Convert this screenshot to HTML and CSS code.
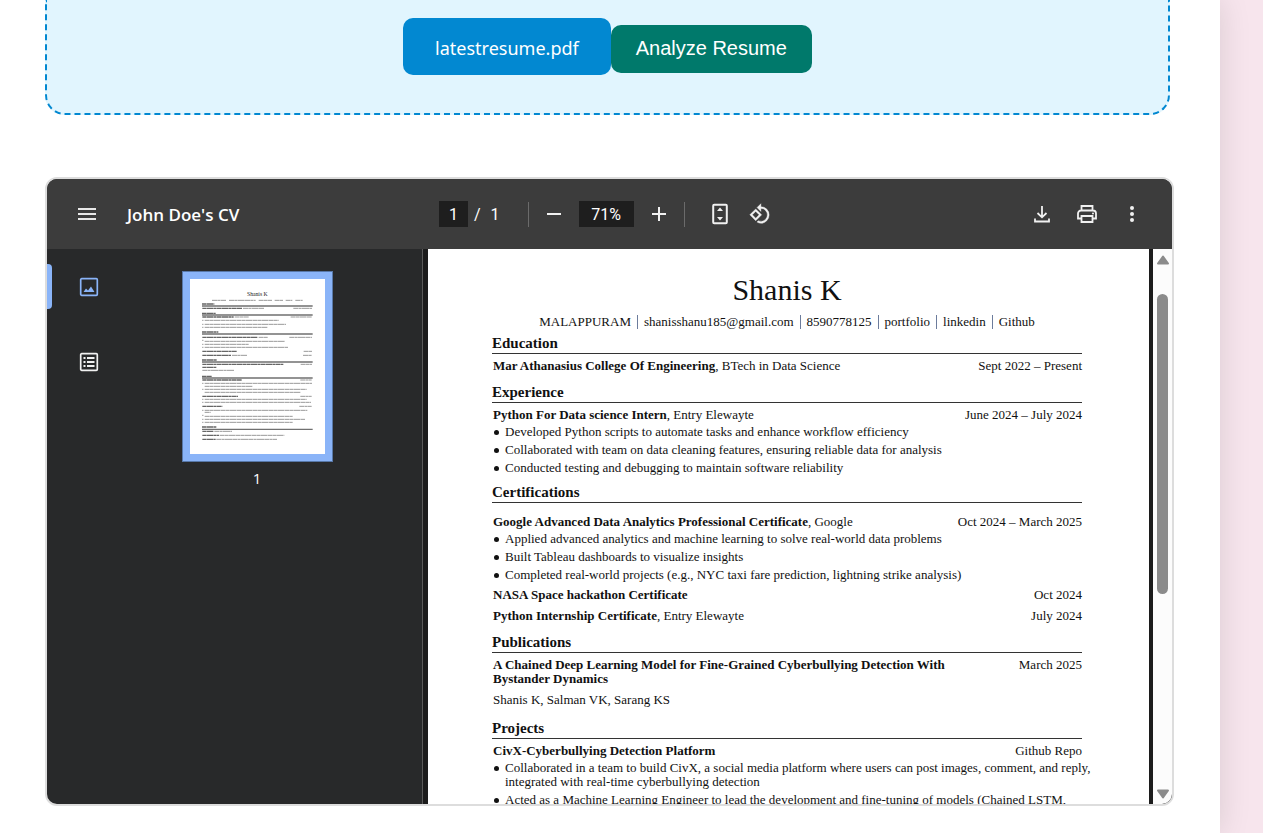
FILE: index.html
```html
<!DOCTYPE html>
<html lang="en">
<head>
<meta charset="utf-8">
<title>Resume Analyzer</title>
<link rel="stylesheet" href="styles.css">
</head>
<body>
<main class="container">
  <section class="upload">
    <button class="file-btn" type="button">latestresume.pdf</button>
    <button class="analyze-btn" type="button">Analyze Resume</button>
  </section>

  <section class="viewer">
    <header class="toolbar">
      <div class="bar-left">
        <button class="icon-btn" type="button" aria-label="Menu"><svg width="20" height="14" viewBox="0 0 20 14"><path d="M1 2h18M1 7h18M1 12h18" stroke="#e8e8e8" stroke-width="2"/></svg></button>
        <span class="doc-title">John Doe's CV</span>
      </div>
      <div class="bar-mid">
        <input class="field page-field" aria-label="Page number" value="1">
        <span class="slash">/</span><span class="total">1</span>
        <span class="divider first"></span>
        <button class="icon-btn" type="button" aria-label="Zoom out"><svg width="14" height="14" viewBox="0 0 14 14"><path d="M0 7h14" stroke="#f1f1f1" stroke-width="2"/></svg></button>
        <input class="field zoom-field" aria-label="Zoom level" value="71%">
        <button class="icon-btn" type="button" aria-label="Zoom in"><svg width="14" height="14" viewBox="0 0 14 14"><path d="M0 7h14M7 0v14" stroke="#f1f1f1" stroke-width="2"/></svg></button>
        <span class="divider"></span>
        <button class="icon-btn fit" type="button" aria-label="Fit to page"><svg width="16" height="22" viewBox="0 0 16 22"><rect x="1.2" y="1.7" width="13.6" height="18.6" rx="1" fill="none" stroke="#f1f1f1" stroke-width="2"/><path d="M8 4.5 11 8H5zM8 17.500 11 14H5z" fill="#f1f1f1"/></svg></button>
        <button class="icon-btn" type="button" aria-label="Rotate"><svg width="22" height="22" viewBox="0 0 24 24"><path fill="#f1f1f1" stroke="#f1f1f1" stroke-width=".4" d="M7.340 6.410.860 12.900l6.490 6.480 6.490-6.480zM3.690 12.900l3.660-3.660L11 12.900l-3.660 3.660zM19.360 6.640A8.950 8.950 0 0 0 13 4V.760L8.760 5 13 9.240V6c1.790 0 3.580.680 4.950 2.050a7.007 7.007 0 0 1 0 9.900 6.973 6.973 0 0 1-7.840 1.390l-1.490 1.490A8.983 8.983 0 0 0 19.360 19.360a8.994 8.994 0 0 0 0-12.720z"/></svg></button>
      </div>
      <div class="bar-right">
        <button class="icon-btn" type="button" aria-label="Download"><svg width="16" height="18" viewBox="0 0 16 18"><path d="M8 1v11M3.500 8 8 12.300 12.500 8M1 13.500V16.500h14v-3" fill="none" stroke="#f1f1f1" stroke-width="1.800"/></svg></button>
        <button class="icon-btn" type="button" aria-label="Print"><svg width="22" height="20" viewBox="0 0 22 20"><g fill="none" stroke="#f1f1f1" stroke-width="1.800"><path d="M5.500 6.500V2h11v4.500M5.500 14.500H2V9.500a3 3 0 0 1 3-3h12a3 3 0 0 1 3 3v5h-3.500"/><path d="M5.500 12h11v6h-11z"/></g><circle cx="17" cy="9.500" r="1" fill="#f1f1f1"/></svg></button>
        <button class="icon-btn" type="button" aria-label="More"><svg width="6" height="18" viewBox="0 0 6 18"><g fill="#f1f1f1"><circle cx="3" cy="3" r="2"/><circle cx="3" cy="9" r="2"/><circle cx="3" cy="15" r="2"/></g></svg></button>
      </div>
    </header>

    <div class="stage">
      <aside class="sidebar">
        <nav class="tabs">
          <button class="tab active" type="button" aria-label="Thumbnails"><svg width="20" height="20" viewBox="0 0 20 20"><rect x="1.700" y="1.700" width="16.600" height="16.600" rx="1" fill="none" stroke="#8ab4f8" stroke-width="1.700"/><path d="M4.500 15 7 11.500l2 2 3-4 3.500 5.500z" fill="#8ab4f8"/></svg></button>
          <button class="tab" type="button" aria-label="Document outline"><svg width="20" height="20" viewBox="0 0 20 20"><rect x="1.700" y="1.700" width="16.600" height="16.600" rx="1" fill="none" stroke="#f1f1f1" stroke-width="1.700"/><path d="M4.500 6h2M4.500 10h2M4.500 14h2M8 6h7.500M8 10h7.500M8 14h7.500" stroke="#f1f1f1" stroke-width="1.800"/></svg></button>
        </nav>
        <div class="thumbs">
          <button class="thumb" type="button" aria-label="Page 1">
            <svg class="mini" viewBox="60 57 405 525">
              <text x="262" y="108" text-anchor="middle" font-size="17" fill="#222">Shanis K</text>
              <path class="m-rule" d="M96 138h332M96 165h332M96 222h332M96 306h332M96 354h332M96 508h332"/>
              <path class="m-bold" d="M96 132h37M96 160h41M96 216h49M96 300h45M96 349h29M96 501h43M97 145h119M97 171h94M97 232h166M97 274h104M97 286h86M97 313h243M97 322h42M97 360h118M97 409h107M97 439h60M97 514h34M97 526h50M97 538h40"/>
              <path class="m-text" d="M126 121h42M177 121h80M266 121h40M314 121h25M347 121h20M376 121h22M219 145h64M370 145h56M194 171h42M362 171h64M104 181h222M104 193h244M104 202h188M266 232h28M358 232h68M104 244h241M104 253h132M104 262h250M401 274h25M186 286h45M399 286h27M392 313h34M97 331h95M391 360h34M104 370h322M104 379h144M104 388h306M104 397h287M391 409h34M104 418h306M104 427h319M388 439h37M104 451h308M104 457h18M104 469h264M104 478h301M104 487h264M133 514h53M149 526h194M139 538h182"/>
              <path class="m-dot" d="M97 181h3M97 193h3M97 202h3M97 241h3M97 253h3M97 262h3M97 370h3M97 388h3M97 418h3M97 427h3M97 451h3M97 466h3M97 478h3M97 487h3"/>
            </svg>
          </button>
          <span class="thumb-no">1</span>
        </div>
      </aside>

      <div class="doc">
        <article class="page">
          <h1>Shanis K</h1>
          <p class="contact"><span>MALAPPURAM</span><span>shanisshanu185@gmail.com</span><span>8590778125</span><span>portfolio</span><span>linkedin</span><span>Github</span></p>

          <h2>Education</h2>
          <div class="entry"><p><b>Mar Athanasius College Of Engineering</b>, BTech in Data Science</p><p>Sept 2022 – Present</p></div>

          <h2>Experience</h2>
          <div class="entry"><p><b>Python For Data science Intern</b>, Entry Elewayte</p><p>June 2024 – July 2024</p></div>
          <ul>
            <li>Developed Python scripts to automate tasks and enhance workflow efficiency</li>
            <li>Collaborated with team on data cleaning features, ensuring reliable data for analysis</li>
            <li>Conducted testing and debugging to maintain software reliability</li>
          </ul>

          <h2>Certifications</h2>
          <div class="entry spaced"><p><b>Google Advanced Data Analytics Professional Certificate</b>, Google</p><p>Oct 2024 – March 2025</p></div>
          <ul>
            <li>Applied advanced analytics and machine learning to solve real-world data problems</li>
            <li>Built Tableau dashboards to visualize insights</li>
            <li>Completed real-world projects (e.g., NYC taxi fare prediction, lightning strike analysis)</li>
          </ul>
          <div class="entry"><p><b>NASA Space hackathon Certificate</b></p><p>Oct 2024</p></div>
          <div class="entry"><p><b>Python Internship Certificate</b>, Entry Elewayte</p><p>July 2024</p></div>

          <h2>Publications</h2>
          <div class="entry"><p><b>A Chained Deep Learning Model for Fine-Grained Cyberbullying Detection With<br>Bystander Dynamics</b></p><p>March 2025</p></div>
          <p class="authors">Shanis K, Salman VK, Sarang KS</p>

          <h2>Projects</h2>
          <div class="entry"><p><b>CivX-Cyberbullying Detection Platform</b></p><p>Github Repo</p></div>
          <ul>
            <li>Collaborated in a team to build CivX, a social media platform where users can post images, comment, and reply,<br>integrated with real-time cyberbullying detection</li>
            <li>Acted as a Machine Learning Engineer to lead the development and fine-tuning of models (Chained LSTM,</li>
          </ul>
        </article>
        <div class="scrollbar">
          <svg width="14" height="10" viewBox="0 0 14 10"><path d="M7 1.500 12 8.500H2z" fill="#8b8b8b" stroke="#8b8b8b" stroke-width="2" stroke-linejoin="round"/></svg>
          <div class="track"><div class="grip"></div></div>
          <svg width="14" height="10" viewBox="0 0 14 10"><path d="M7 8.500 12 1.500H2z" fill="#8b8b8b" stroke="#8b8b8b" stroke-width="2" stroke-linejoin="round"/></svg>
        </div>
      </div>
    </div>
  </section>
</main>
</body>
</html>
```
FILE: styles.css
```css
* { box-sizing: border-box; }

body {
  margin: 0;
  min-height: 100vh;
  display: flex;
  overflow: hidden;
  background: #f7e5ed;
  font-family: "Open Sans", "Noto Sans", sans-serif;
}

button, input { border: 0; padding: 0; margin: 0; font: inherit; color: inherit; }
button { background: none; cursor: pointer; }
p, h1, h2, ul { margin: 0; padding: 0; }
svg { display: block; }

.container {
  flex: 1;
  min-width: 0;
  margin-right: 43px;
  padding: 0 46px 28px 45px;
  background: #fff;
  box-shadow: 0 0 30px rgba(0, 0, 0, 0.12);
}

.upload {
  display: flex;
  justify-content: center;
  align-items: baseline;
  margin-right: 4px;
  padding: 18px 0 38px;
  background: #e1f5fe;
  border: 2px dashed #0288d1;
  border-top: 0;
  border-radius: 0 0 20px 20px;
}

.file-btn {
  padding: 17px 32px 13px;
  border-radius: 10px;
  background: #0288d1;
  color: #fff;
  font-family: "Noto Sans", sans-serif;
  font-size: 18px;
  line-height: 27px;
}

.analyze-btn {
  padding: 11px 25px 13px;
  border-radius: 10px;
  background: #00796b;
  color: #fff;
  font-family: "Liberation Sans", Arial, sans-serif;
  font-size: 20px;
  line-height: 24px;
}

.viewer {
  margin-top: 62px;
  border: 2px solid #ddd;
  border-radius: 12px;
  overflow: hidden;
  background: #28292a;
}

.toolbar {
  display: flex;
  align-items: center;
  justify-content: space-between;
  height: 70px;
  padding: 0 18px 0 30px;
  background: #3c3c3c;
  color: #fff;
}

.bar-left, .bar-mid, .bar-right { display: flex; align-items: center; }
.bar-left { gap: 30px; width: 362px; }
.bar-mid { font-family: Roboto, sans-serif; font-size: 16px; flex: 1; }
.bar-right .icon-btn { display: flex; justify-content: center; width: 45px; }
.doc-title { font-size: 17px; font-weight: 600; }
.field { height: 26px; background: #1e1e1e; color: #fff; text-align: center; }
.page-field { width: 29px; }
.zoom-field { width: 55px; margin: 0 18px; }
.slash { margin: 0 10px 0 6px; }
.divider { width: 1px; height: 25px; margin: 0 27px 0 18px; background: #6b6b6b; }
.divider.first { margin: 0 18px 0 28px; }
.fit { margin-right: 21px; }

.stage { display: flex; height: 555px; }

.sidebar {
  display: flex;
  width: 376px;
  padding-top: 15px;
  border-right: 1px solid #5a5a5a;
}
.tabs { width: 85px; display: flex; flex-direction: column; gap: 30px; }
.tab { position: relative; display: flex; align-items: center; height: 45px; padding-left: 32px; }
.tab.active::before {
  content: "";
  position: absolute;
  left: 0;
  top: 0;
  width: 5px;
  height: 100%;
  border-radius: 0 4px 4px 0;
  background: #8ab4f8;
}
.thumbs { flex: 1; display: flex; flex-direction: column; align-items: center; padding: 7px 40px 0 0; }
.thumb { padding: 7px; background: #8ab4f8; border: 1px solid #5878a8; }
.mini { width: 135px; height: 175px; background: #fff; font-family: "Liberation Serif", serif; }
.mini path { fill: none; }
.m-rule { stroke: #707070; stroke-width: 4; }
.m-bold { stroke: #666; stroke-width: 4; stroke-dasharray: 13 1 19 1 9 1; }
.m-text { stroke: #999; stroke-width: 3; stroke-dasharray: 15 1 9 1 21 1; }
.m-dot { stroke: #777; stroke-width: 3; }
.thumb-no { margin-top: 5px; color: #fff; font-size: 15px; line-height: 22px; }

.doc {
  flex: 1;
  min-width: 0;
  display: flex;
  gap: 4px;
  padding-left: 5px;
  overflow: hidden;
  background: #1c1c1c;
}

.page {
  flex: 1;
  min-width: 0;
  padding: 24px 67px 0 64px;
  background: #fff;
  color: #111;
  font-family: "Liberation Serif", "Times New Roman", serif;
  font-size: 13px;
  line-height: 14px;
}
.page h1 { font-size: 30px; font-weight: 400; line-height: 34px; text-align: center; }
.contact { display: flex; justify-content: center; margin: 8px 0 3px; white-space: nowrap; }
.contact span + span { margin-left: 6px; padding-left: 6px; border-left: 1px solid #6c7c9c; }
.page h2 {
  margin-top: 9px;
  border-bottom: 1px solid #333;
  font-size: 15px;
  line-height: 20px;
}
.page .contact + h2 { margin-top: 4px; }
.page ul + h2 { margin-top: 7px; }
.page .authors + h2 { margin-top: 11px; }
.entry { display: flex; justify-content: space-between; margin-top: 6px; padding-left: 1px; white-space: nowrap; }
h2 + .entry { margin-top: 5px; }
h2 + .entry.spaced { margin-top: 12px; }
.entry + .entry { margin-top: 7px; }
.page ul { margin-top: 3px; list-style: none; }
.page li { position: relative; padding-left: 13px; white-space: nowrap; }
.page li + li { margin-top: 4px; }
.page li::before {
  content: "";
  position: absolute;
  left: 2px;
  top: 5px;
  width: 5px;
  height: 5px;
  border-radius: 50%;
  background: #111;
}
.authors { margin-top: 7px; padding-left: 1px; }

.scrollbar {
  display: flex;
  flex-direction: column;
  align-items: center;
  width: 19px;
  padding: 6px 0 5px;
  background: #fcfcfc;
}
.track { flex: 1; padding-top: 29px; }
.grip { width: 11px; height: 300px; border-radius: 6px; background: #8b8b8b; }
```
